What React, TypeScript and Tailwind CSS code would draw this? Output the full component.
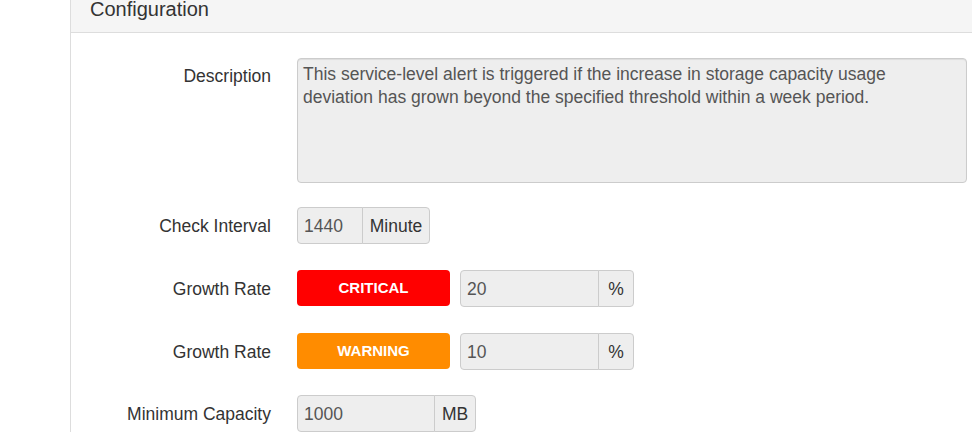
import React from "react";

const FONT = "font-['Liberation_Sans',Arial,sans-serif]";

function Label({ children, top = false }: { children: React.ReactNode; top?: boolean }) {
  return (
    <div
      className={
        "w-[200px] shrink-0 text-right text-[17.5px] text-[#333] " +
        (top ? "pt-[6px] leading-[25px]" : "h-[37px] pt-[1px] leading-[36px]")
      }
    >
      {children}
    </div>
  );
}

function InputGroup({
  value,
  unit,
  inputW,
  unitW,
}: {
  value: string;
  unit: string;
  inputW: string;
  unitW: string;
}) {
  return (
    <div className="flex h-[37px]">
      <div
        className={
          inputW +
          " h-full rounded-l-[4px] border border-[#ccc] bg-[#eee] pl-[6px] pt-[1px] text-[17.5px] leading-[34px] text-[#555]"
        }
      >
        {value}
      </div>
      <div
        className={
          unitW +
          " -ml-px h-full rounded-r-[4px] border border-[#ccc] bg-[#eee] pt-[1px] text-center text-[17.5px] leading-[34px] text-[#333]"
        }
      >
        {unit}
      </div>
    </div>
  );
}

function Severity({ label, color }: { label: string; color: string }) {
  return (
    <div
      className={
        color +
        " flex h-[36px] w-[153px] items-center justify-center rounded-[4px] text-[15px] font-bold text-white"
      }
    >
      {label}
    </div>
  );
}

export default function App() {
  return (
    <div className={FONT + " h-[438px] w-full overflow-hidden bg-white pl-[70px]"}>
      <div className="w-[1000px] border-l border-[#ddd]">
        {/* panel heading, scrolled partly out of view */}
        <div className="h-[33px] border-b border-[#ddd] bg-[#f5f5f5] pl-[19px] text-[20px] leading-[19px] text-[#333]">
          Configuration
        </div>

        <div className="flex flex-col pt-[25px]">
          <div className="flex">
            <Label top>Description</Label>
            <div className="ml-[26px] h-[125px] w-[670px] rounded-[4px] border border-[#ccc] bg-[#eee] px-[5px] pt-[4px] text-[17.5px] leading-[22.5px] text-[#555] shadow-[inset_0_1px_1px_rgba(0,0,0,0.075)]">
              <div className="whitespace-nowrap">
                This service-level alert is triggered if the increase in storage capacity usage
              </div>
              <div className="whitespace-nowrap">
                deviation has grown beyond the specified threshold within a week period.
              </div>
            </div>
          </div>

          <div className="mt-[24px] flex">
            <Label>Check Interval</Label>
            <div className="ml-[26px]">
              <InputGroup value="1440" unit="Minute" inputW="w-[66px]" unitW="w-[68px]" />
            </div>
          </div>

          <div className="mt-[26px] flex">
            <Label>Growth Rate</Label>
            <div className="ml-[26px] flex items-start gap-[10px]">
              <Severity label="CRITICAL" color="bg-[#ff0000]" />
              <InputGroup value="20" unit="%" inputW="w-[139px]" unitW="w-[36px]" />
            </div>
          </div>

          <div className="mt-[26px] flex">
            <Label>Growth Rate</Label>
            <div className="ml-[26px] flex items-start gap-[10px]">
              <Severity label="WARNING" color="bg-[#ff8c00]" />
              <InputGroup value="10" unit="%" inputW="w-[139px]" unitW="w-[36px]" />
            </div>
          </div>

          <div className="mt-[25px] flex">
            <Label>Minimum Capacity</Label>
            <div className="ml-[26px]">
              <InputGroup value="1000" unit="MB" inputW="w-[138px]" unitW="w-[42px]" />
            </div>
          </div>
        </div>
      </div>
    </div>
  );
}
